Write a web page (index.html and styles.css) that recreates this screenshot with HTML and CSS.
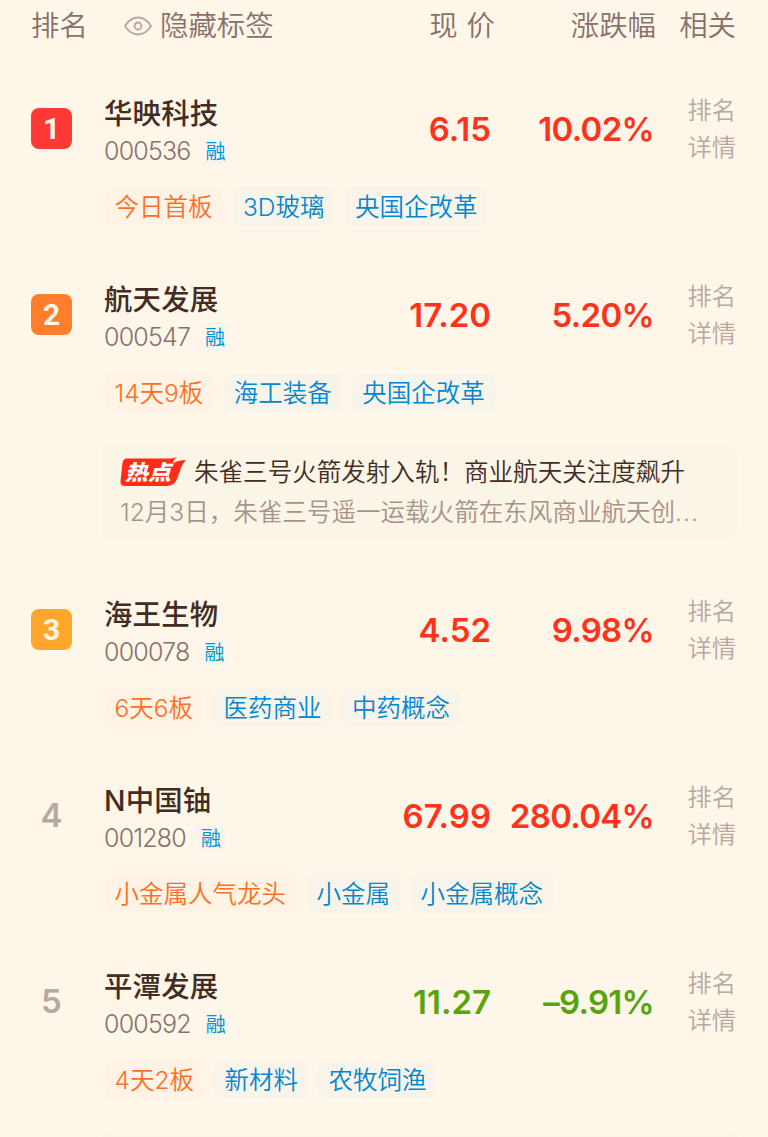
FILE: index.html
```html
<!DOCTYPE html>
<html lang="zh-CN">
<head>
    <meta charset="UTF-8">
    <meta name="viewport" content="width=device-width, initial-scale=1.0">
    <title>人气排名</title>
    <link rel="stylesheet" href="styles.css">
</head>
<body>
    <div class="list-header">
        <span>排名</span>
        <span class="toggle">
            <svg class="eye" viewBox="0 0 28 20" fill="none" stroke="currentColor" stroke-width="1.8">
                <path d="M1 10C4.500 4.500 9 1.500 14 1.500S23.500 4.500 27 10C23.500 15.500 19 18.500 14 18.500S4.500 15.500 1 10Z"/>
                <circle cx="14" cy="10" r="3.500"/>
            </svg>
            隐藏标签
        </span>
        <span class="head-price">现 价</span>
        <span class="head-change">涨跌幅</span>
        <span class="head-more">相关</span>
    </div>

    <div class="stock">
        <div class="quote">
            <div class="rank badge badge-1">1</div>
            <div class="info">
                <div class="name">华映科技</div>
                <div class="code">000536 <span class="margin">融</span></div>
            </div>
            <div class="price up">6.15</div>
            <div class="change up">10.02%</div>
            <div class="more"><span>排名</span><span>详情</span></div>
        </div>
        <div class="tags">
            <span class="tag hot">今日首板</span>
            <span class="tag">3D玻璃</span>
            <span class="tag">央国企改革</span>
        </div>
    </div>

    <div class="stock">
        <div class="quote">
            <div class="rank badge badge-2">2</div>
            <div class="info">
                <div class="name">航天发展</div>
                <div class="code">000547 <span class="margin">融</span></div>
            </div>
            <div class="price up">17.20</div>
            <div class="change up">5.20%</div>
            <div class="more"><span>排名</span><span>详情</span></div>
        </div>
        <div class="tags">
            <span class="tag hot">14天9板</span>
            <span class="tag">海工装备</span>
            <span class="tag">央国企改革</span>
        </div>
        <div class="news">
            <div class="news-title">
                <svg class="hot-icon" viewBox="0 0 66 30">
                    <path fill="#ff2d17" d="M7 1.500H46Q53 1.500 57 0Q53 3 53 6.500Q58 3 66 3Q62 7 60 14L57 22Q54 29 47 29H5Q0 29 .5 24L2.500 6Q3 1.500 7 1.500Z"/>
                    <text x="5" y="23" textLength="46" lengthAdjust="spacingAndGlyphs" class="hot-text">热点</text>
                </svg>
                <span>朱雀三号火箭发射入轨！商业航天关注度飙升</span>
            </div>
            <div class="news-desc">12月3日，朱雀三号遥一运载火箭在东风商业航天创<span class="dots">...</span></div>
        </div>
    </div>

    <div class="stock">
        <div class="quote">
            <div class="rank badge badge-3">3</div>
            <div class="info">
                <div class="name">海王生物</div>
                <div class="code">000078 <span class="margin">融</span></div>
            </div>
            <div class="price up">4.52</div>
            <div class="change up">9.98%</div>
            <div class="more"><span>排名</span><span>详情</span></div>
        </div>
        <div class="tags">
            <span class="tag hot">6天6板</span>
            <span class="tag">医药商业</span>
            <span class="tag">中药概念</span>
        </div>
    </div>

    <div class="stock">
        <div class="quote">
            <div class="rank">4</div>
            <div class="info">
                <div class="name">N中国铀</div>
                <div class="code">001280 <span class="margin">融</span></div>
            </div>
            <div class="price up">67.99</div>
            <div class="change up">280.04%</div>
            <div class="more"><span>排名</span><span>详情</span></div>
        </div>
        <div class="tags">
            <span class="tag hot">小金属人气龙头</span>
            <span class="tag">小金属</span>
            <span class="tag">小金属概念</span>
        </div>
    </div>

    <div class="stock">
        <div class="quote">
            <div class="rank">5</div>
            <div class="info">
                <div class="name">平潭发展</div>
                <div class="code">000592 <span class="margin">融</span></div>
            </div>
            <div class="price down">11.27</div>
            <div class="change down">–9.91%</div>
            <div class="more"><span>排名</span><span>详情</span></div>
        </div>
        <div class="tags">
            <span class="tag hot">4天2板</span>
            <span class="tag">新材料</span>
            <span class="tag">农牧饲渔</span>
        </div>
        <div class="news news-cut"></div>
    </div>
</body>
</html>
```

FILE: styles.css
```css
* {
    box-sizing: border-box;
}
body {
    margin: 0;
    background-color: #fef6e8;
    color: #432c23;
    font-family: Inter, "Noto Sans CJK SC", sans-serif;
    font-weight: 350;
}
.list-header {
    display: grid;
    grid-template-columns: 92px 1fr 100px 161px 80px;
    align-items: center;
    height: 70px;
    padding: 0 32px 18px 31px;
    font-size: 28.4px;
    line-height: 40px;
    color: #89716a;
    white-space: nowrap;
}
.toggle {
    display: flex;
    align-items: center;
    gap: 8px;
}
.eye {
    width: 28px;
    height: 20px;
    margin-left: 1px;
    color: #b8a79d;
}
.head-price,
.head-change,
.head-more {
    text-align: right;
}
.head-price {
    word-spacing: 1px;
}
.stock {
    margin: 0 32px 0 31px;
    padding: 23px 0 29px;
    border-bottom: 1px solid #fcf4e7;
}
.stock:last-child {
    padding-bottom: 0;
    border-bottom: none;
}
.quote {
    display: grid;
    grid-template-columns: 73px 1fr 120px 162px 83px;
    height: 94px;
}
.rank {
    width: 41px;
    height: 41px;
    margin-top: 15px;
    font-size: 33px;
    font-weight: 600;
    line-height: 41px;
    text-align: center;
    color: #b9a89f;
}
.badge {
    border-radius: 8px;
    font-family: Roboto, sans-serif;
    font-size: 30px;
    font-weight: 700;
    line-height: 42px;
    color: #fff6e8;
}
.badge-1 {
    background-color: #ff3936;
}
.badge-2 {
    background-color: #ff7e2c;
}
.badge-3 {
    background-color: #ffa62b;
}
.name {
    padding-top: 1px;
    font-size: 28.4px;
    font-weight: 500;
    letter-spacing: 0.2px;
    line-height: 39px;
}
.code {
    display: flex;
    align-items: center;
    gap: 11px;
    font-size: 25px;
    font-weight: 300;
    letter-spacing: -0.8px;
    line-height: 36px;
    color: #89716a;
}
.margin {
    width: 28px;
    height: 27px;
    font-size: 20px;
    font-weight: 400;
    letter-spacing: 0;
    line-height: 28px;
    text-align: center;
    color: #0095d9;
    background-color: #f9f5ea;
}
.price,
.change {
    padding-top: 15px;
    font-size: 33px;
    font-weight: 600;
    line-height: 42px;
    text-align: right;
}
.change {
    margin-right: -1px;
    letter-spacing: -0.7px;
}
.up {
    color: #ff331b;
}
.down {
    color: #58a40c;
}
.more {
    display: flex;
    flex-direction: column;
    align-items: flex-end;
    margin-top: -1px;
    font-size: 24.3px;
    line-height: 36.5px;
    color: #b9a89f;
}
.tags {
    display: flex;
    gap: 10.5px;
    margin-left: 73.5px;
}
.tag {
    height: 39px;
    padding: 0 10px;
    border-radius: 8px;
    font-size: 24.5px;
    line-height: 40px;
    color: #0087d3;
    background-color: #f8f4e9;
}
.tag.hot {
    color: #ff6f1f;
    background-color: #fef3e5;
}
.news {
    height: 98px;
    margin: 31px -1px 0 70px;
    padding: 9px 20px 0 19px;
    border-radius: 10px;
    background-color: #fbf5e7;
    font-size: 24.55px;
    line-height: 40px;
    white-space: nowrap;
}
.news-cut {
    height: 7px;
    padding: 0;
    border-radius: 10px 10px 0 0;
}
.news-title {
    display: flex;
    align-items: center;
    gap: 8px;
}
.hot-icon {
    width: 66px;
    height: 30px;
}
.hot-text {
    font-family: "Noto Sans CJK SC", sans-serif;
    font-size: 21px;
    font-weight: 900;
    font-style: italic;
    fill: #fff;
}
.news-desc {
    color: #a89289;
}
.dots {
    letter-spacing: 1px;
}
```
